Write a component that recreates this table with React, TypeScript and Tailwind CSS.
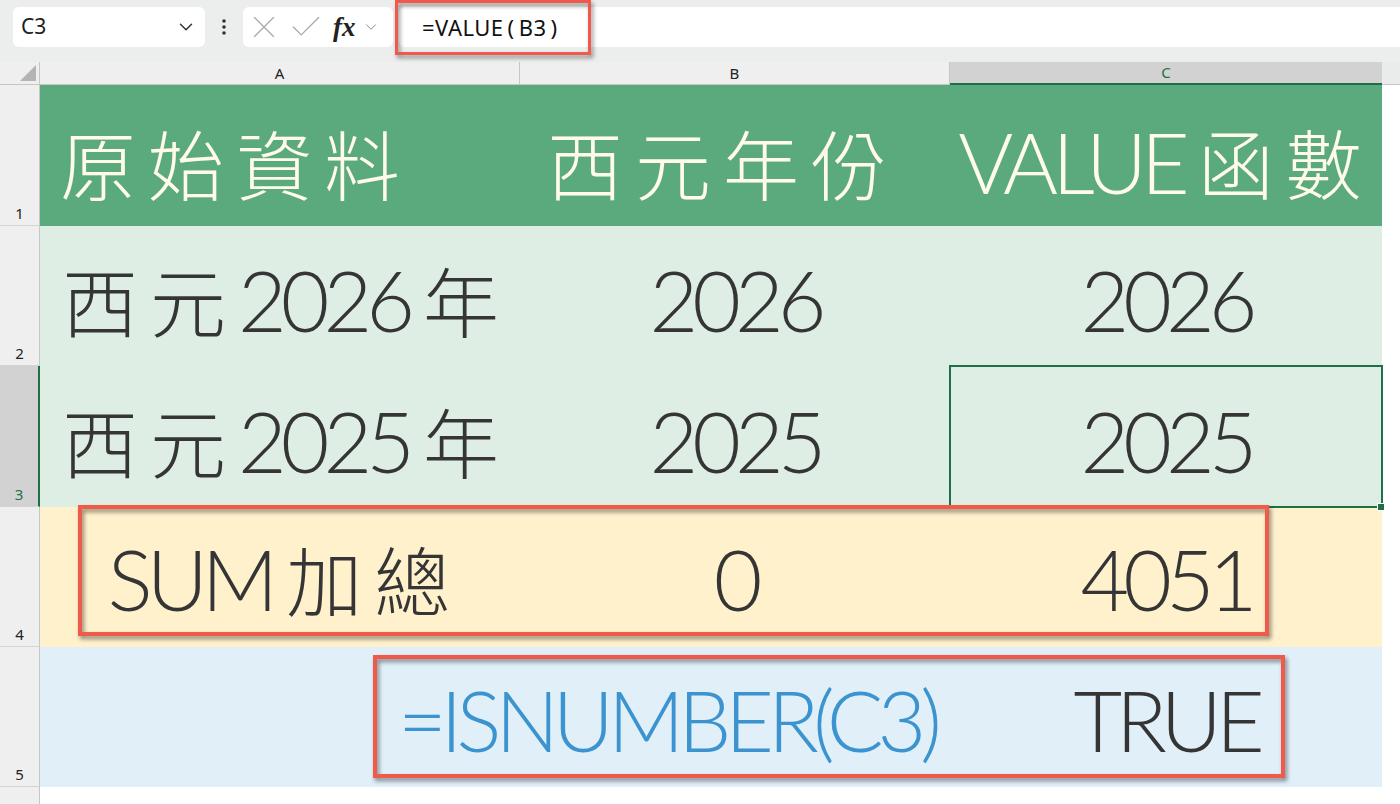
import { ChevronDown, X, Check } from 'lucide-react';

const latin = "font-['Lato','Noto_Sans_CJK_TC',sans-serif] font-light tracking-[-6px]";
const cjk = "font-['Noto_Sans_CJK_TC',sans-serif] font-light text-[76px] tracking-[12px]";

function RowHead({ n, active = false, h }: { n?: number; active?: boolean; h: string }) {
  return (
    <div
      className={`${h} w-[40px] shrink-0 flex items-end justify-center pb-[1px] text-[15px] font-['Noto_Sans',sans-serif] border-b border-[#d4d4d4] ${
        active
          ? 'bg-[#d2d2d2] text-[#1e7145] border-r-2 border-r-[#1e7145]'
          : 'bg-[#efefef] text-[#222] border-r border-r-[#c6c6c6]'
      }`}
    >
      {n}
    </div>
  );
}

export default function App() {
  return (
    <div className="relative w-[1400px] h-[804px] overflow-hidden bg-white text-[#353535]">
      {/* formula bar */}
      <div className="h-[62px] bg-[#eceeed] flex items-start pt-[7px] pl-[13px]">
        <div className="w-[192px] h-[40px] bg-white rounded-md flex items-center justify-between pl-[8px] pr-[8px] text-[21px] text-[#222] font-['Noto_Sans',sans-serif]">
          <span>C3</span>
          <ChevronDown size={22} strokeWidth={1.6} className="text-[#333]" />
        </div>
        <div className="w-[38px] h-[40px] flex items-center justify-center">
          <svg width="6" height="18" viewBox="0 0 6 18">
            <circle cx="3" cy="3" r="1.8" fill="#333" />
            <circle cx="3" cy="9" r="1.8" fill="#333" />
            <circle cx="3" cy="15" r="1.8" fill="#333" />
          </svg>
        </div>
        <div className="w-[150px] h-[40px] bg-white rounded-md flex items-center pl-[2px]">
          <X size={38} strokeWidth={0.8} className="text-[#a8a8a8]" />
          <Check size={38} strokeWidth={0.8} className="text-[#a8a8a8] ml-[4px]" />
          <span className="font-['Liberation_Serif',serif] italic font-bold text-[27px] text-[#222] ml-[8px] leading-none">fx</span>
          <ChevronDown size={18} strokeWidth={1.3} className="text-[#888] ml-[6px]" />
        </div>
        <div className="flex-1 h-[40px] bg-white rounded-l-md ml-[6px] flex items-center pl-[23px] text-[22px] text-[#111] font-['Noto_Sans',sans-serif] tracking-[0.5px]">
          =VALUE<span className="mx-[4px]">(</span>B3<span className="ml-[4px]">)</span>
        </div>
      </div>

      {/* column headers */}
      <div className="flex h-[23px] text-[15px] font-['Noto_Sans',sans-serif]">
        <div className="w-[40px] bg-[#efefef] border-r border-b border-[#c6c6c6] flex items-end justify-end p-[3px]">
          <svg width="16" height="16" viewBox="0 0 16 16">
            <path d="M16 0 L16 16 L0 16 Z" fill="#b4b4b4" />
          </svg>
        </div>
        <div className="w-[480px] bg-[#efefef] border-r border-b border-[#c6c6c6] flex items-center justify-center text-[#222]">A</div>
        <div className="w-[430px] bg-[#efefef] border-r border-b border-[#c6c6c6] flex items-center justify-center text-[#222]">B</div>
        <div className="w-[432px] bg-[#d2d2d2] border-b-2 border-[#1e7145] flex items-center justify-center text-[#1e7145]">C</div>
        <div className="flex-1 bg-[#e9ecea] border-b border-[#c6c6c6]" />
      </div>

      {/* row 1 */}
      <div className="flex">
        <RowHead n={1} h="h-[141px]" />
        <div className="w-[1342px] h-[141px] bg-[#5baa7d] flex items-center pt-[12px] text-[#fffbe8]">
          <div className="w-[480px] pl-[20px]"><span className={cjk}>原始資料</span></div>
          <div className="w-[430px] flex justify-center pr-[24px]"><span className={cjk}>西元年份</span></div>
          <div className="w-[432px] flex justify-center items-baseline">
            <span className={`${latin} text-[84px]`}>VALUE</span>
            <span className={`${cjk} ml-[14px] tracking-[8px]`}>函數</span>
          </div>
        </div>
      </div>

      {/* row 2 */}
      <div className="flex">
        <RowHead n={2} h="h-[140px]" />
        <div className="w-[1342px] h-[140px] bg-[#deeee5] flex items-center pt-[8px]">
          <div className="w-[480px] pl-[22px] flex items-baseline">
            <span className={cjk}>西元</span>
            <span className={`${latin} text-[84px]`}>2026</span>
            <span className={`${cjk} ml-[14px]`}>年</span>
          </div>
          <div className={`w-[430px] text-center ${latin} text-[84px]`}>2026</div>
          <div className={`w-[432px] text-center ${latin} text-[84px]`}>2026</div>
        </div>
      </div>

      {/* row 3 */}
      <div className="flex">
        <RowHead n={3} active h="h-[141px]" />
        <div className="w-[1342px] h-[141px] bg-[#deeee5] flex items-center pt-[8px]">
          <div className="w-[480px] pl-[22px] flex items-baseline">
            <span className={cjk}>西元</span>
            <span className={`${latin} text-[84px]`}>2025</span>
            <span className={`${cjk} ml-[14px]`}>年</span>
          </div>
          <div className={`w-[430px] text-center ${latin} text-[84px]`}>2025</div>
          <div className={`w-[432px] text-center ${latin} text-[84px]`}>2025</div>
        </div>
      </div>

      {/* row 4 */}
      <div className="flex">
        <RowHead n={4} h="h-[140px]" />
        <div className="w-[1342px] h-[140px] bg-[#fff1cc] flex items-center pt-[4px]">
          <div className="w-[480px] flex justify-center items-baseline pl-[10px]">
            <span className={`${latin} text-[84px]`}>SUM</span>
            <span className={`${cjk} ml-[14px] tracking-[10px]`}>加總</span>
          </div>
          <div className={`w-[430px] text-center ${latin} text-[84px]`}>0</div>
          <div className={`w-[432px] text-center ${latin} text-[84px]`}>4051</div>
        </div>
      </div>

      {/* row 5 */}
      <div className="flex">
        <RowHead n={5} h="h-[140px]" />
        <div className="w-[1342px] h-[140px] bg-[#e1eff8] flex items-center pt-[6px]">
          <div className={`w-[910px] flex justify-end pr-[14px] ${latin} text-[84px] text-[#3b94cf]`}>=ISNUMBER(C3)</div>
          <div className={`w-[432px] text-center ${latin} text-[84px]`}>TRUE</div>
        </div>
      </div>

      {/* row 6 */}
      <div className="flex">
        <RowHead h="h-[40px]" />
      </div>

      {/* selected cell C3 */}
      <div className="absolute left-[949px] top-[365px] w-[434px] h-[143px] border-2 border-[#1e7145]" />
      <div className="absolute left-[1377px] top-[503px] w-[8px] h-[8px] bg-[#1e7145] border border-white" />

      {/* red annotation boxes */}
      <div className="absolute left-[395px] top-[0px] w-[196px] h-[55px] border-[3px] border-[#ef5a4b] drop-shadow-[2px_3px_2px_rgba(0,0,0,0.45)]" />
      <div className="absolute left-[78px] top-[505px] w-[1191px] h-[131px] border-4 border-[#ef5a4b] drop-shadow-[2px_3px_2px_rgba(0,0,0,0.45)]" />
      <div className="absolute left-[373px] top-[655px] w-[912px] h-[123px] border-4 border-[#ef5a4b] drop-shadow-[2px_3px_2px_rgba(0,0,0,0.45)]" />
    </div>
  );
}
